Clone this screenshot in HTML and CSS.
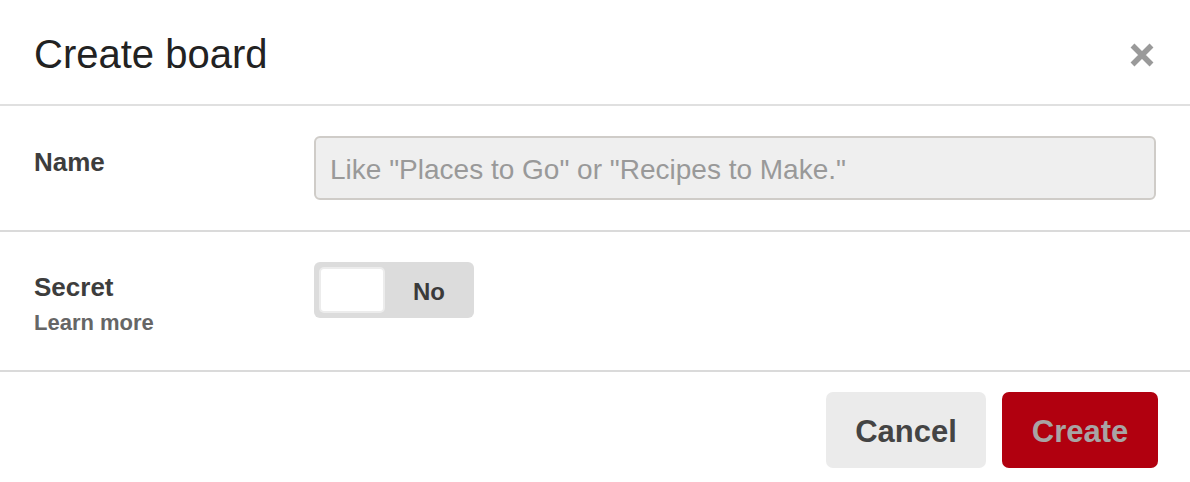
FILE: index.html
```html
<!DOCTYPE html>
<html>
<head>
<meta charset="utf-8">
<link rel="stylesheet" href="styles.css">
</head>
<body>
<div class="modal">
  <div class="header">
    <h1 class="title">Create board</h1>
    <button class="close" aria-label="Close">
      <svg width="24" height="24" viewBox="0 0 24 24"><path d="M2.5 2.5 L21.5 21.5 M21.5 2.5 L2.5 21.5" stroke="#9a9a9a" stroke-width="5.5" fill="none"/></svg>
    </button>
  </div>
  <div class="row row-name">
    <div class="label-col"><div class="label name-label">Name</div></div>
    <div class="field-col">
      <input class="input" type="text" placeholder="Like &quot;Places to Go&quot; or &quot;Recipes to Make.&quot;">
    </div>
  </div>
  <div class="row row-secret">
    <div class="label-col">
      <div class="label secret-label">Secret</div>
      <div class="learn">Learn more</div>
    </div>
    <div class="field-col">
      <div class="toggle">
        <div class="knob"></div>
        <div class="toggle-text">No</div>
      </div>
    </div>
  </div>
  <div class="footer">
    <button class="btn btn-cancel">Cancel</button>
    <button class="btn btn-create">Create</button>
  </div>
</div>
</body>
</html>
```
FILE: styles.css
```css
html, body {
  margin: 0;
  padding: 0;
  background: #fff;
}
body {
  font-family: "Liberation Sans", Arial, Helvetica, sans-serif;
  width: 1190px;
  height: 482px;
  overflow: hidden;
}
.modal {
  width: 1190px;
}
.header {
  display: flex;
  align-items: flex-start;
  justify-content: space-between;
  padding: 34px 36px 30px 34px;
  border-bottom: 2px solid #e0e0e0;
}
.title {
  margin: 0;
  font-size: 40px;
  line-height: 40px;
  font-weight: normal;
  color: #222;
}
.close {
  margin-top: 9px;
  padding: 0;
  border: 0;
  background: none;
  width: 24px;
  height: 24px;
  display: block;
}
.close svg {
  display: block;
}
.row {
  display: flex;
  padding: 30px 34px;
  border-bottom: 2px solid #dadada;
}
.label-col {
  width: 280px;
  flex: none;
}
.field-col {
  flex: 1;
}
.label {
  font-size: 26px;
  line-height: 26px;
  font-weight: bold;
  color: #3d3d3d;
}
.name-label {
  margin-top: 13px;
}
.secret-label {
  margin-top: 12px;
}
.learn {
  margin-top: 12px;
  font-size: 22px;
  line-height: 22px;
  font-weight: bold;
  color: #666;
}
.input {
  box-sizing: border-box;
  width: 842px;
  height: 64px;
  margin: 0;
  padding: 3px 14px 0;
  border: 2px solid #cfccc8;
  border-radius: 6px;
  background: #efefef;
  font-family: "Liberation Sans", Arial, sans-serif;
  font-size: 28px;
  color: #333;
  outline: none;
}
.input::placeholder {
  color: #999;
}
.row-secret {
  height: 78px;
}
.toggle {
  box-sizing: border-box;
  width: 160px;
  height: 56px;
  background: #dcdcdc;
  border-radius: 6px;
  display: flex;
  align-items: center;
  padding: 5px;
}
.knob {
  box-sizing: border-box;
  width: 66px;
  height: 46px;
  background: #fff;
  border: 2px solid #ececec;
  border-radius: 5px;
}
.toggle-text {
  flex: 1;
  text-align: center;
  font-size: 24px;
  font-weight: bold;
  color: #3a3a3a;
  padding: 3px 0 0 4px;
}
.footer {
  display: flex;
  justify-content: flex-end;
  gap: 16px;
  padding: 20px 32px 0 0;
}
.btn {
  height: 76px;
  padding: 4px 29px 0;
  border: 0;
  border-radius: 7px;
  font-family: "Liberation Sans", Arial, sans-serif;
  font-size: 31px;
  font-weight: bold;
}
.btn-cancel {
  width: 160px;
  background: #ebebeb;
  color: #444;
}
.btn-create {
  width: 156px;
  background: #b1000f;
  color: #a8a4a4;
}
```
